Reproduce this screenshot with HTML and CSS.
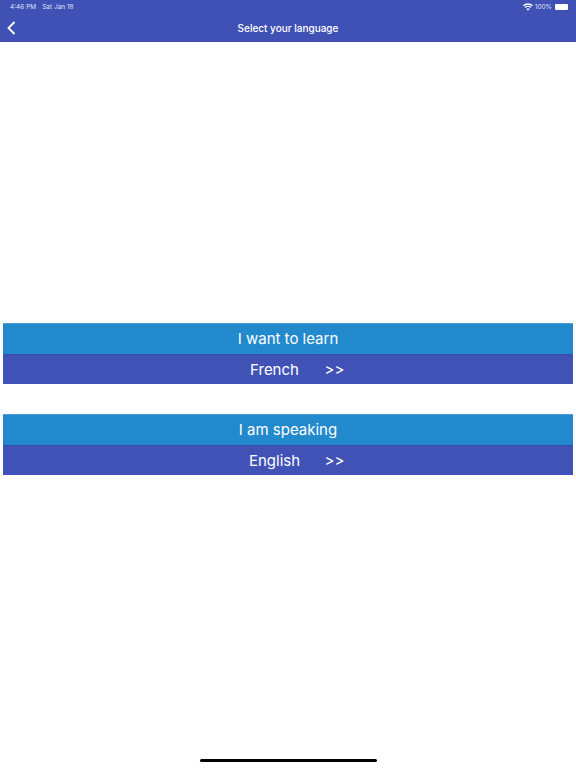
FILE: index.html
```html
<!DOCTYPE html>
<html lang="en">
<head>
  <meta charset="UTF-8">
  <meta name="viewport" content="width=device-width, initial-scale=1.0">
  <title>Select your language</title>
  <link rel="stylesheet" href="styles.css">
</head>
<body>
  <div class="app">
    <header class="header">
      <div class="status">
        <span class="status-time">4:46 PM</span>
        <span>Sat Jan 18</span>
        <span class="status-right">
          <svg class="wifi" width="10" height="8" viewBox="0 0 10 8">
            <path d="M5 7.6 3.4 5.9a2.3 2.3 0 0 1 3.2 0Z" fill="#fff"/>
            <path d="M2.5 5 1.6 4a4.9 4.9 0 0 1 6.8 0l-.9 1a3.6 3.6 0 0 0-5 0Z" fill="#fff"/>
            <path d="M.9 3.3 0 2.3a7.2 7.2 0 0 1 10 0l-.9 1a5.9 5.9 0 0 0-8.200 0Z" fill="#fff"/>
          </svg>
          <span>100%</span>
          <span class="battery"></span>
        </span>
      </div>
      <div class="nav">
        <svg class="back" width="9" height="14" viewBox="0 0 9 14">
          <path d="M7.500 1 1.500 7l6 6" fill="none" stroke="#fff" stroke-width="1.800"/>
        </svg>
        <span class="nav-title">Select your language</span>
      </div>
    </header>

    <main class="content">
      <section class="panel">
        <div class="panel-label">I want to learn</div>
        <div class="panel-choice"><span class="choice-name">French</span><span class="choice-arrows">&gt;&gt;</span></div>
      </section>
      <section class="panel">
        <div class="panel-label">I am speaking</div>
        <div class="panel-choice"><span class="choice-name">English</span><span class="choice-arrows">&gt;&gt;</span></div>
      </section>
    </main>

    <div class="home-bar"></div>
  </div>
</body>
</html>
```

FILE: styles.css
```css
* {
  box-sizing: border-box;
}

body {
  margin: 0;
  background-color: #fff;
  font-family: Inter, "Liberation Sans", sans-serif;
  color: #fff;
}

.app {
  display: flex;
  flex-direction: column;
  height: 768px;
  overflow: hidden;
}

.header {
  height: 42px;
  background-color: #3f51b5;
}

.status {
  display: flex;
  align-items: center;
  gap: 6px;
  height: 13px;
  padding: 1px 8px 0 10px;
  font-size: 6.500px;
  color: #dfe3f5;
}

.status-right {
  display: flex;
  align-items: center;
  gap: 2px;
  margin-left: auto;
}

.battery {
  width: 13px;
  height: 6px;
  margin-left: 1px;
  background-color: #fff;
  border-radius: 1px;
}

.nav {
  position: relative;
  display: flex;
  align-items: center;
  justify-content: center;
  height: 29px;
}

.back {
  position: absolute;
  left: 7px;
  top: 8px;
}

.nav-title {
  font-size: 10px;
  font-weight: 500;
}

.content {
  display: flex;
  flex-direction: column;
  gap: 30px;
  padding: 281px 3px 0;
}

.panel-label,
.panel-choice {
  display: flex;
  align-items: center;
  justify-content: center;
  height: 30.500px;
  font-size: 15px;
}

.panel-label {
  background-color: #2389cd;
  border-top: 1px solid #4a9fd6;
}

.panel-choice {
  background-color: #4152b7;
  border-top: 1px solid #3a4aa8;
}

.choice-name {
  width: 90px;
  text-align: center;
}

.choice-arrows {
  width: 24px;
  margin-left: 3px;
  text-align: center;
}

.home-bar {
  width: 177px;
  height: 3px;
  margin: 284px auto 0;
  background-color: #000;
  border-radius: 2px;
}
```
